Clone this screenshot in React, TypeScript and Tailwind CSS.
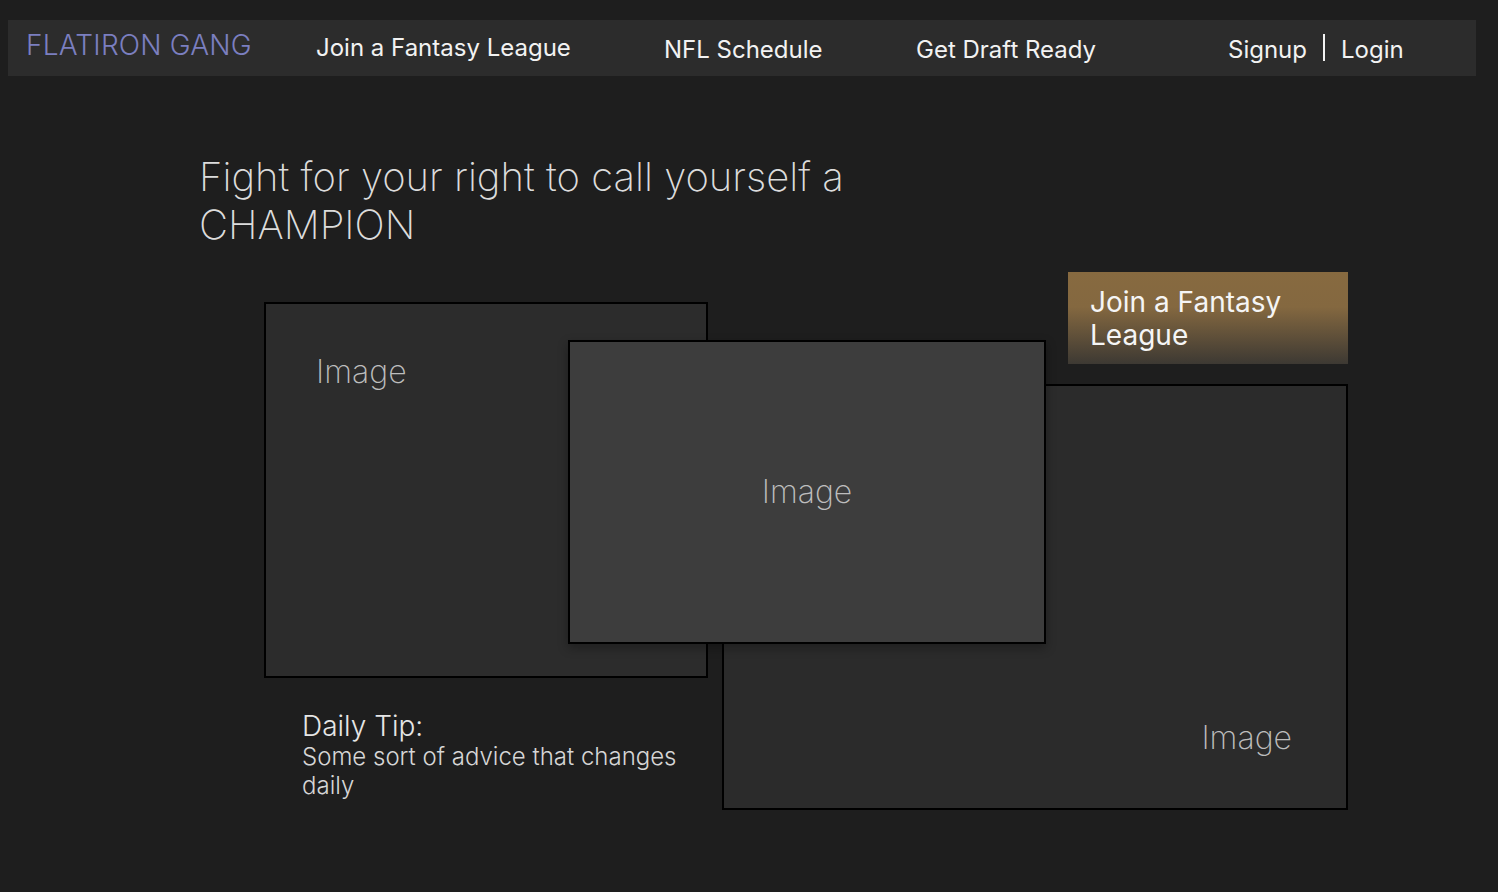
import React from 'react';

const navLinks = [
  { label: 'Join a Fantasy League', width: 'w-[348px]', pad: 'pt-[13px]' },
  { label: 'NFL Schedule', width: 'w-[252px]', pad: 'pt-[15px]' },
  { label: 'Get Draft Ready', width: 'w-[312px]', pad: 'pt-[15px]' },
];

function NavBar() {
  return (
    <nav className="ml-2 w-[1468px] h-14 bg-[#2c2c2c] flex items-start">
      <div className="w-[308px] pl-[18px] pt-[8px] text-[28px] leading-[34px] font-light text-[#7b7fc0] tracking-[0.2px]">
        FLATIRON GANG
      </div>
      {navLinks.map(l => (
        <a key={l.label} className={`${l.width} ${l.pad} text-[24px] leading-[29px] text-[#f2f2f2] cursor-pointer`}>
          {l.label}
        </a>
      ))}
      <div className="flex items-start pt-[15px] text-[24px] leading-[29px] text-[#f2f2f2]">
        <a className="cursor-pointer">Signup</a>
        <span className="mx-4 -mt-[1px] w-[2px] h-[27px] bg-[#f2f2f2]" />
        <a className="cursor-pointer">Login</a>
      </div>
    </nav>
  );
}

function ImageLabel({ className = '' }: { className?: string }) {
  return <span className={`text-[32px] leading-[40px] font-extralight text-[#bdbdbd] ${className}`}>Image</span>;
}

export default function App() {
  return (
    <div className="min-h-screen bg-[#1e1e1e] pt-5 font-['Inter',sans-serif]">
      <NavBar />

      <h1 className="ml-[199px] mt-[77px] text-[40px] leading-[48px] font-extralight text-[#dcdcdc]">
        Fight for your right to call yourself a
        <br />
        CHAMPION
      </h1>

      <div className="relative ml-[264px] mt-[23px] w-[1084px] flex justify-between">
        {/* left column */}
        <div className="w-[444px] pt-[30px]">
          <div className="h-[376px] border-2 border-black bg-[#2c2c2c] pl-[50px] pt-[48px]">
            <ImageLabel />
          </div>
          <div className="ml-[38px] mt-[32px] w-[400px] font-light">
            <div className="text-[28px] leading-[32px] text-[#e6e6e6]">Daily Tip:</div>
            <div className="text-[24px] leading-[29px] text-[#d6d6d6]">Some sort of advice that changes daily</div>
          </div>
        </div>

        {/* right column */}
        <div className="w-[626px] flex flex-col items-end">
          <button className="w-[280px] h-[92px] bg-[linear-gradient(180deg,#876a40_0%,#846840_38%,#3d3933_100%)] text-left pl-[22px] pt-[2px] self-end">
            <span className="block text-[28px] leading-[33px] text-[#f5f5f5]">
              Join a Fantasy
              <br />
              League
            </span>
          </button>
          <div className="mt-5 w-full h-[426px] border-2 border-black bg-[#2b2b2b] flex items-end justify-end pr-[54px] pb-[50px]">
            <ImageLabel />
          </div>
        </div>

        {/* center card overlaps both columns */}
        <div className="absolute left-[304px] top-[68px] w-[478px] h-[304px] border-2 border-black bg-[#3d3d3d] shadow-[0_4px_10px_rgba(0,0,0,0.3)] flex items-center justify-center">
          <ImageLabel />
        </div>
      </div>
    </div>
  );
}
